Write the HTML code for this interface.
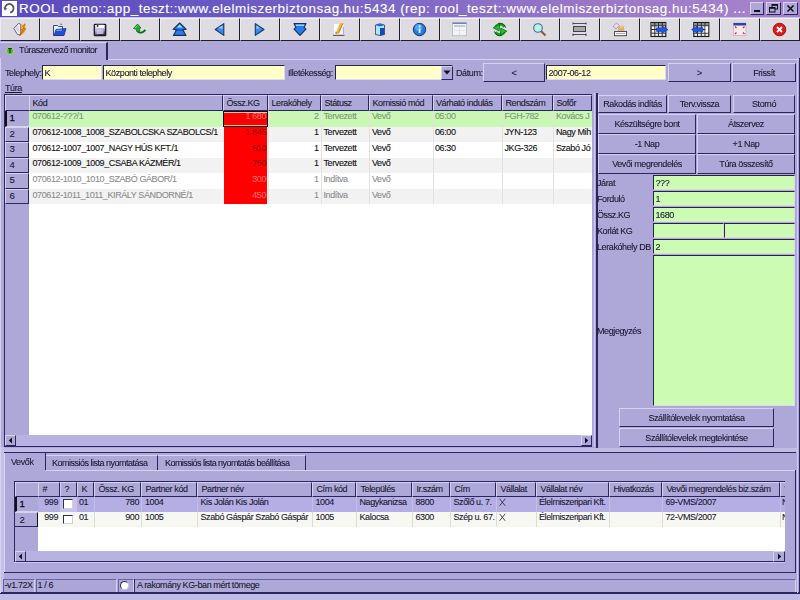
<!DOCTYPE html>
<html><head><meta charset="utf-8">
<style>
*{box-sizing:border-box}
html,body{margin:0;padding:0;width:800px;height:600px;overflow:hidden;background:#aea8d9;font-family:"Liberation Sans",sans-serif;color:#1a1830}
.a{position:absolute}
.t{position:absolute;white-space:nowrap;font-size:9px;line-height:10px;letter-spacing:-0.4px;color:#1a1830;-webkit-text-stroke:0.1px currentColor}
.tb{position:absolute;top:18px;width:40px;height:23.3px;background:#dedce0;border-top:1px solid #f2f0f4;border-left:1px solid #eceaf2;border-right:1.2px solid #1e1e28;border-bottom:1.5px solid #1e1e28}
.tb svg{position:absolute}
</style></head><body><div style="position:absolute;left:0;top:0;width:800px;height:600px;overflow:hidden;filter:blur(0.3px)">
<div class="a" style="left:0px;top:0px;width:800px;height:17px;background:linear-gradient(90deg,#5a4abe 0%,#6a5ac4 30%,#9a78c8 75%,#a684cc 100%)"></div>
<div class="a" style="left:2px;top:1px;width:15px;height:15px;background:#fff"></div>
<svg class="a" style="left:3px;top:2px" width="13" height="13" viewBox="0 0 13 13"><path d="M2.1 7.2 A4.3 4.3 0 1 1 7.1 10.5" fill="none" stroke="#4c5660" stroke-width="1.8"/><path d="M0.9 5.6 L2.2 8.2 L3.9 6.2" fill="none" stroke="#4c5660" stroke-width="1"/></svg>
<div class="t" style="left:19px;top:0px;font-size:13.4px;line-height:17px;color:#fff;letter-spacing:0.52px;-webkit-text-stroke:0.12px #fff">ROOL demo::app_teszt::www.elelmiszerbiztonsag.hu:5434 (rep: rool_teszt::www.elelmiszerbiztonsag.hu:5434) ...</div>
<div class="a" style="left:750px;top:2px;width:14px;height:13px;background:#aea8d9;border-top:1px solid #d6d3ee;border-left:1px solid #d6d3ee;border-right:1px solid #2c2660;border-bottom:1px solid #2c2660;"></div>
<div class="a" style="left:766px;top:2px;width:15px;height:13px;background:#aea8d9;border-top:1px solid #d6d3ee;border-left:1px solid #d6d3ee;border-right:1px solid #2c2660;border-bottom:1px solid #2c2660;"></div>
<div class="a" style="left:783px;top:2px;width:15px;height:13px;background:#aea8d9;border-top:1px solid #d6d3ee;border-left:1px solid #d6d3ee;border-right:1px solid #2c2660;border-bottom:1px solid #2c2660;"></div>
<div class="a" style="left:754px;top:10px;width:6px;height:2px;background:#101018"></div>
<svg class="a" style="left:766px;top:2px" width="15" height="13" viewBox="0 0 15 13"><rect x="6" y="2.5" width="5.5" height="4.5" fill="none" stroke="#101018" stroke-width="1"/><rect x="6" y="2.5" width="5.5" height="1.3" fill="#101018"/><rect x="3.5" y="5.5" width="5.5" height="4.5" fill="#aea8d9" stroke="#101018" stroke-width="1"/><rect x="3.5" y="5.5" width="5.5" height="1.3" fill="#101018"/></svg>
<svg class="a" style="left:783px;top:2px" width="15" height="13" viewBox="0 0 15 13"><path d="M4.5 3.5 L10.5 9.5 M10.5 3.5 L4.5 9.5" stroke="#101018" stroke-width="1.6"/></svg>
<div class="a" style="left:0px;top:17px;width:800px;height:1px;background:#c8c4e4"></div>
<div id="toolbar"><div class="tb" style="left:0px"><svg width="20" height="20" viewBox="0 0 20 20" style="left:9px;top:0px"><path d="M8.5 4.5 L3.8 9.5 L7.5 15.5 L10.5 16 L10.5 5 Z" fill="#f4f2ff" stroke="#505070" stroke-width="0.9" stroke-linejoin="round"/><path d="M5 9.5 L8.5 6 L9.5 14.5 Z" fill="#d8d0f4"/><path d="M10.5 5 Q15.5 6 15.8 10 Q15.5 14 10.5 16 Z" fill="#f0a830"/><path d="M14.6 4.8 L10.4 10.8 L12.8 10.8 L9.8 16.6 L15.6 9.6 L13.2 9.6 L15.2 5.2 Z" fill="#e89018" stroke="#a85808" stroke-width="0.6"/><path d="M12.8 7.5 L11.5 10" stroke="#ffe080" stroke-width="0.8"/></svg></div><div class="tb" style="left:40px"><svg width="20" height="20" viewBox="0 0 20 20" style="left:9px;top:0px"><path d="M3.5 6.5 L7.5 6.5 L8.5 7.5 L12.5 7.5 L12.5 16.5 L3.5 16.5 Z" fill="#dff4ff" stroke="#404870" stroke-width="1"/><path d="M10 5 L12 5.5" stroke="#6070a0" stroke-width="1"/><path d="M6 10.5 L16 9.5 L14 16.5 L4 16.5 Z" fill="#2050d8" stroke="#203080" stroke-width="0.8"/><path d="M6.5 11.5 L12 11" stroke="#8ab0ff" stroke-width="1"/></svg></div><div class="tb" style="left:80px"><svg width="20" height="20" viewBox="0 0 20 20" style="left:9px;top:0px"><defs><linearGradient id="fl" x1="0" y1="0" x2="0.3" y2="1"><stop offset="0" stop-color="#e8e6f8"/><stop offset="0.55" stop-color="#b8b4d8"/><stop offset="1" stop-color="#303048"/></linearGradient></defs><rect x="4.3" y="5.3" width="11.4" height="11.4" rx="0.8" fill="url(#fl)" stroke="#1a1a28" stroke-width="1.3"/><rect x="6.2" y="5.8" width="7.8" height="3.2" fill="#ffffff"/><rect x="6.8" y="5.8" width="1.6" height="2.4" fill="#404050"/><rect x="6.5" y="10.5" width="7" height="4.5" fill="#d4d0ee" opacity="0.8"/></svg></div><div class="tb" style="left:120px"><svg width="20" height="20" viewBox="0 0 20 20" style="left:9px;top:0px"><path d="M3.5 9.5 L7.5 5 L11 9 L9 9.5 L10 12 L7 13 L6 10 Z" fill="#20b030" stroke="#106018" stroke-width="0.7"/><path d="M8 12.5 Q10.5 15.5 15.5 11" fill="none" stroke="#0a6a14" stroke-width="1.8"/><path d="M5 9 L7.5 6.5" stroke="#80f080" stroke-width="0.8"/></svg></div><div class="tb" style="left:160px"><svg width="20" height="20" viewBox="0 0 20 20" style="left:9px;top:0px"><path d="M9.7 4 L16.3 10.3 L12.9 10.9 L16 16.4 L3.4 16.4 L6.5 10.9 L3.1 10.3 Z" fill="#2a7ce8" stroke="#16305e" stroke-width="1.1" stroke-linejoin="round"/><path d="M9.7 5.6 L12.4 8.4 L7 8.4 Z" fill="#a0e8ff"/><path d="M5.5 11 L13.9 11" stroke="#0e3a8a" stroke-width="0.9"/></svg></div><div class="tb" style="left:200px"><svg width="20" height="20" viewBox="0 0 20 20" style="left:9px;top:0px"><path d="M5.2 10.5 L13.8 4.6 L13.8 16.4 Z" fill="#3a8ae8" stroke="#18386a" stroke-width="1.1" stroke-linejoin="round"/><path d="M8 9 L12.5 6.5 L12.5 10 Z" fill="#a0e0ff" opacity="0.8"/></svg></div><div class="tb" style="left:240px"><svg width="20" height="20" viewBox="0 0 20 20" style="left:9px;top:0px"><path d="M14 10.5 L5.3 4.6 L5.3 16.4 Z" fill="#3a8ae8" stroke="#18386a" stroke-width="1.1" stroke-linejoin="round"/><path d="M6.5 6.5 L10 9 L6.5 10 Z" fill="#a0e0ff" opacity="0.8"/></svg></div><div class="tb" style="left:280px"><svg width="20" height="20" viewBox="0 0 20 20" style="left:9px;top:0px"><path d="M4 4.6 L16 4.6 L14 8.4 L16 10.2 L10 16.4 L4 10.2 L6 8.4 Z" fill="#2a7ce8" stroke="#16305e" stroke-width="1.1" stroke-linejoin="round"/><path d="M5.6 5.5 L14.4 5.5 L14 7 L6 7 Z" fill="#90d8ff"/></svg></div><div class="tb" style="left:320px"><svg width="20" height="20" viewBox="0 0 20 20" style="left:9px;top:0px"><rect x="4" y="5" width="9.5" height="10.5" fill="#fbf8ff"/><path d="M13.5 4.2 L9 14.5 L5.5 14.5 L10 4.2 Z" fill="#f0b838"/><path d="M12.8 4.5 L8.4 14.3" stroke="#c88020" stroke-width="1"/><path d="M5.6 12.5 L5.5 14.5 L7.5 14.5" fill="#606060"/><path d="M3 16.4 L14.5 16.4" stroke="#606060" stroke-width="1.2"/><path d="M13.4 8 L13.4 15" stroke="#b0a8f0" stroke-width="1.2"/></svg></div><div class="tb" style="left:360px"><svg width="20" height="20" viewBox="0 0 20 20" style="left:9px;top:0px"><path d="M5.5 6 Q10 3.5 14.5 6 L14.5 15.5 Q10 17.5 5.5 15.5 Z" fill="#a8e8ff" stroke="#303858" stroke-width="0.8"/><path d="M10 9 L14.3 9 L14.3 15.5 Q12 16.5 10 16.5 Z" fill="#1848c0"/><path d="M5.8 6 Q10 8.5 14.2 6 Q10 4 5.8 6 Z" fill="#2a60d8"/></svg></div><div class="tb" style="left:400px"><svg width="20" height="20" viewBox="0 0 20 20" style="left:9px;top:0px"><circle cx="9.5" cy="10.5" r="6.2" fill="#2a78e0" stroke="#183870" stroke-width="1"/><circle cx="8.5" cy="8.5" r="3.5" fill="#70c0ff" opacity="0.6"/><rect x="8.7" y="9.5" width="1.8" height="4.5" fill="#e0f4ff"/><rect x="8.7" y="6.5" width="1.8" height="1.8" fill="#e0f4ff"/></svg></div><div class="tb" style="left:440px"><svg width="20" height="20" viewBox="0 0 20 20" style="left:9px;top:0px"><rect x="2.5" y="3.8" width="14" height="13" fill="#f2f4f4" stroke="#b0b4c8" stroke-width="0.8"/><rect x="2.5" y="3.5" width="14" height="1.5" fill="#7080c0"/><rect x="4" y="6.3" width="11" height="1.4" fill="#8890a0" opacity="0.6"/><path d="M9.5 8.5 L9.5 16" stroke="#d8dce0" stroke-width="0.8"/><path d="M4 11.5 L15 11.5" stroke="#e4e0d8" stroke-width="0.8"/></svg></div><div class="tb" style="left:480px"><svg width="20" height="20" viewBox="0 0 20 20" style="left:9px;top:0px"><path d="M5.2 9.5 A5 5 0 0 1 14.5 8" fill="none" stroke="#16a024" stroke-width="2.6"/><path d="M14.8 11.5 A5 5 0 0 1 5.5 13" fill="none" stroke="#16a024" stroke-width="2.6"/><path d="M8 4.6 A5.8 5.8 0 0 1 15.6 8.6" fill="none" stroke="#0a4a10" stroke-width="0.9"/><path d="M12 16.4 A5.8 5.8 0 0 1 4.4 12.4" fill="none" stroke="#0a4a10" stroke-width="0.9"/><path d="M3.2 8.8 L9.6 5.2 L9.2 12 Z" fill="#22c030" stroke="#0a5c10" stroke-width="0.7" stroke-linejoin="round"/><path d="M16.8 12.2 L10.4 15.8 L10.8 9 Z" fill="#22c030" stroke="#0a5c10" stroke-width="0.7" stroke-linejoin="round"/></svg></div><div class="tb" style="left:520px"><svg width="20" height="20" viewBox="0 0 20 20" style="left:9px;top:0px"><path d="M11 12 L15.5 16.5" stroke="#8a6040" stroke-width="2.2"/><circle cx="8" cy="9" r="4.3" fill="#b8f0f8" stroke="#407080" stroke-width="1.1"/></svg></div><div class="tb" style="left:560px"><svg width="20" height="20" viewBox="0 0 20 20" style="left:9px;top:0px"><path d="M3 4.5 L16 4.5 M3 15.5 L16 15.5" stroke="#505058" stroke-width="1"/><rect x="3.5" y="7.5" width="12" height="5" fill="#a8a8a8" stroke="#404048" stroke-width="1"/><path d="M3 3.5 L3 5.5 M16 3.5 L16 5.5 M3 14.5 L3 17 M16 14.5 L16 17" stroke="#404048" stroke-width="1"/></svg></div><div class="tb" style="left:600px"><svg width="20" height="20" viewBox="0 0 20 20" style="left:9px;top:0px"><path d="M3 7.5 L6.5 4 L9.5 6.5 L6 10 Z" fill="#e0ddf4" stroke="#8888a8" stroke-width="0.7"/><path d="M8 7.5 L13.5 6.5 L14.5 12.5 L8 12.5 Z" fill="#e0b070"/><path d="M10 8 L12.5 8" stroke="#f8e0b0" stroke-width="1"/><rect x="4.5" y="12.5" width="12" height="4.2" fill="#f4f4f4" stroke="#505050" stroke-width="1"/><path d="M6 14.5 L15 14.5" stroke="#a0a0a0" stroke-width="0.8"/></svg></div><div class="tb" style="left:640px"><svg width="20" height="20" viewBox="0 0 20 20" style="left:9px;top:0px"><rect x="1" y="3.5" width="14.8" height="14" fill="#f0f0f0" stroke="#202020" stroke-width="1.2"/><rect x="1.5" y="4" width="14" height="2.6" fill="#8c8c80"/><path d="M1 6.8 L15.8 6.8 M1 10.5 L15.8 10.5 M1 14.2 L15.8 14.2 M4.8 3.5 L4.8 17.5 M8.5 3.5 L8.5 17.5 M12.2 3.5 L12.2 17.5" stroke="#303030" stroke-width="1"/><path d="M6.5 8.8 L12.5 8.8 L12.5 7.2 L18 10.6 L12.5 14 L12.5 12.4 L6.5 12.4 Z" fill="#1a5ae8" stroke="#0a34b0" stroke-width="0.6"/></svg></div><div class="tb" style="left:680px"><svg width="20" height="20" viewBox="0 0 20 20" style="left:9px;top:0px"><rect x="3.8" y="3.5" width="15" height="14" fill="#f0f0f0" stroke="#202020" stroke-width="1.2"/><rect x="4.3" y="4" width="14" height="2.6" fill="#8c8c80"/><path d="M3.8 6.8 L18.8 6.8 M3.8 10.5 L18.8 10.5 M3.8 14.2 L18.8 14.2 M7.5 3.5 L7.5 17.5 M11.3 3.5 L11.3 17.5 M15 3.5 L15 17.5" stroke="#303030" stroke-width="1"/><rect x="15.5" y="7.5" width="2.6" height="6" fill="#ffffff"/><path d="M13 8.8 L7 8.8 L7 7.2 L1.5 10.6 L7 14 L7 12.4 L13 12.4 Z" fill="#1a5ae8" stroke="#0a34b0" stroke-width="0.6"/></svg></div><div class="tb" style="left:720px"><svg width="20" height="20" viewBox="0 0 20 20" style="left:9px;top:0px"><rect x="3.5" y="4" width="12.5" height="12.5" fill="#fce8e8" stroke="#c8b0c0" stroke-width="0.8"/><rect x="3.5" y="4" width="12.5" height="2.5" fill="#2848a8"/><path d="M5 7.5 L6.5 9 M14.5 7.5 L13 9 M5 15 L6.5 13.5 M14.5 15 L13 13.5" stroke="#a04060" stroke-width="1.3"/></svg></div><div class="tb" style="left:760px"><svg width="20" height="20" viewBox="0 0 20 20" style="left:9px;top:0px"><circle cx="9.5" cy="10.5" r="6.3" fill="#e01818" stroke="#901010" stroke-width="0.9"/><path d="M7 8 L12 13 M12 8 L7 13" stroke="#fff" stroke-width="1.8"/></svg></div></div>
<div class="a" style="left:0px;top:42px;width:108px;height:18px;border-top:1px solid #d6d3ee;border-right:2px solid #2c2660"></div>
<div class="a" style="left:108px;top:59px;width:692px;height:1px;background:#d6d3ee"></div>
<div class="a" style="left:6px;top:46.5px;width:8px;height:8px;border-radius:50%;background:#58b038;border:1px solid #98d878"></div>
<div class="t" style="left:6px;top:46.5px;width:8px;text-align:center;font-size:6.5px;font-weight:bold;color:#102810;line-height:8.5px;letter-spacing:0">T</div>
<div class="t" style="left:19px;top:44.7px;font-size:9px;letter-spacing:-0.45px">Túraszervező monitor</div>
<div class="t" style="left:5px;top:67.9px;">Telephely:</div>
<div class="a" style="left:42px;top:65px;width:60px;height:15px;background:#ffffc8;border-top:1.3px solid #262640;border-left:1.5px solid #262640;border-bottom:1px solid #dcd8f0;border-right:1px solid #dcd8f0"></div>
<div class="t" style="left:44.5px;top:67.9px;">K</div>
<div class="a" style="left:103px;top:65px;width:182px;height:15px;background:#ffffc8;border-top:1.3px solid #262640;border-left:1.5px solid #262640;border-bottom:1px solid #dcd8f0;border-right:1px solid #dcd8f0"></div>
<div class="t" style="left:105.5px;top:67.9px;">Központi telephely</div>
<div class="t" style="left:288px;top:67.9px;">Illetékesség:</div>
<div class="a" style="left:335px;top:65px;width:118px;height:15px;background:#ffffc8;border-top:1.3px solid #262640;border-left:1.5px solid #262640;border-bottom:1px solid #dcd8f0;border-right:1px solid #dcd8f0"></div>
<div class="a" style="left:441px;top:66px;width:12px;height:14px;background:#aea8d9;border-top:1px solid #d6d3ee;border-left:1px solid #d6d3ee;border-right:1px solid #2c2660;border-bottom:1px solid #2c2660;"></div>
<svg class="a" style="left:443px;top:70px" width="8" height="5" viewBox="0 0 8 5"><path d="M0.5 0.5 L7.5 0.5 L4 4.5 Z" fill="#101018"/></svg>
<div class="t" style="left:456px;top:67.9px;">Dátum:</div>
<div class="a" style="left:483px;top:63px;width:62px;height:19px;background:#aea8d9;border-top:1px solid #d6d3ee;border-left:1px solid #d6d3ee;border-right:1px solid #2c2660;border-bottom:1px solid #2c2660;"></div>
<div class="t" style="left:483px;width:62px;text-align:center;top:67.6px;">&lt;</div>
<div class="a" style="left:546px;top:65px;width:120px;height:15px;background:#ffffc8;border-top:1.3px solid #262640;border-left:1.5px solid #262640;border-bottom:1px solid #dcd8f0;border-right:1px solid #dcd8f0"></div>
<div class="t" style="left:548.5px;top:67.9px;">2007-06-12</div>
<div class="a" style="left:668px;top:63px;width:63px;height:19px;background:#aea8d9;border-top:1px solid #d6d3ee;border-left:1px solid #d6d3ee;border-right:1px solid #2c2660;border-bottom:1px solid #2c2660;"></div>
<div class="t" style="left:668px;width:63px;text-align:center;top:67.6px;">&gt;</div>
<div class="a" style="left:732px;top:63px;width:64px;height:19px;background:#aea8d9;border-top:1px solid #d6d3ee;border-left:1px solid #d6d3ee;border-right:1px solid #2c2660;border-bottom:1px solid #2c2660;"></div>
<div class="t" style="left:732px;width:64px;text-align:center;top:67.6px;">Frissít</div>
<div class="t" style="left:5px;top:82.9px;"><u>Túra</u></div>
<div class="a" style="left:4px;top:94px;width:588px;height:353px;background:#fff;border-left:1px solid #2c2660;border-top:1px solid #2c2660"></div>
<div class="a" style="left:5px;top:95px;width:24px;height:340px;background:#aea8d9"></div>
<div class="a" style="left:5px;top:95px;width:24px;height:16px;background:#aea8d9;border-top:1px solid #d6d3ee;border-left:1px solid #d6d3ee;border-bottom:1px solid #2c2660"></div>
<div class="a" style="left:29px;top:95px;width:194px;height:16px;background:#aea8d9;border-top:1px solid #d6d3ee;border-left:1px solid #d6d3ee;border-right:1px solid #2c2660;border-bottom:1px solid #2c2660;"></div>
<div class="t" style="left:32.5px;top:97.9px;">Kód</div>
<div class="a" style="left:223px;top:95px;width:45px;height:16px;background:#aea8d9;border-top:1px solid #d6d3ee;border-left:1px solid #d6d3ee;border-right:1px solid #2c2660;border-bottom:1px solid #2c2660;"></div>
<div class="t" style="left:226.5px;top:97.9px;">Össz.KG</div>
<div class="a" style="left:268px;top:95px;width:53px;height:16px;background:#aea8d9;border-top:1px solid #d6d3ee;border-left:1px solid #d6d3ee;border-right:1px solid #2c2660;border-bottom:1px solid #2c2660;"></div>
<div class="t" style="left:271.5px;top:97.9px;">Lerakóhely</div>
<div class="a" style="left:321px;top:95px;width:48px;height:16px;background:#aea8d9;border-top:1px solid #d6d3ee;border-left:1px solid #d6d3ee;border-right:1px solid #2c2660;border-bottom:1px solid #2c2660;"></div>
<div class="t" style="left:324.5px;top:97.9px;">Státusz</div>
<div class="a" style="left:369px;top:95px;width:63.5px;height:16px;background:#aea8d9;border-top:1px solid #d6d3ee;border-left:1px solid #d6d3ee;border-right:1px solid #2c2660;border-bottom:1px solid #2c2660;"></div>
<div class="t" style="left:372.5px;top:97.9px;">Komissió mód</div>
<div class="a" style="left:432.5px;top:95px;width:69.5px;height:16px;background:#aea8d9;border-top:1px solid #d6d3ee;border-left:1px solid #d6d3ee;border-right:1px solid #2c2660;border-bottom:1px solid #2c2660;"></div>
<div class="t" style="left:436.0px;top:97.9px;">Várható indulás</div>
<div class="a" style="left:502px;top:95px;width:51px;height:16px;background:#aea8d9;border-top:1px solid #d6d3ee;border-left:1px solid #d6d3ee;border-right:1px solid #2c2660;border-bottom:1px solid #2c2660;"></div>
<div class="t" style="left:505.5px;top:97.9px;">Rendszám</div>
<div class="a" style="left:553px;top:95px;width:39px;height:16px;background:#aea8d9;border-top:1px solid #d6d3ee;border-left:1px solid #d6d3ee;border-right:1px solid #2c2660;border-bottom:1px solid #2c2660;"></div>
<div class="t" style="left:556.5px;top:97.9px;">Sofőr</div>
<div class="a" style="left:29px;top:111px;width:563px;height:93.30000000000001px;overflow:hidden">
<div class="a" style="left:0px;top:0.0px;width:563px;height:15.55px;background:#c8f8b4"></div>
<div class="a" style="left:239px;top:0.0px;width:1px;height:15.55px;background:#e2e2e2"></div>
<div class="a" style="left:292px;top:0.0px;width:1px;height:15.55px;background:#e2e2e2"></div>
<div class="a" style="left:340px;top:0.0px;width:1px;height:15.55px;background:#e2e2e2"></div>
<div class="a" style="left:403.5px;top:0.0px;width:1px;height:15.55px;background:#e2e2e2"></div>
<div class="a" style="left:473px;top:0.0px;width:1px;height:15.55px;background:#e2e2e2"></div>
<div class="a" style="left:524px;top:0.0px;width:1px;height:15.55px;background:#e2e2e2"></div>
<div class="a" style="left:0px;top:15.55px;width:563px;height:15.55px;background:#f2f2f2"></div>
<div class="a" style="left:239px;top:15.55px;width:1px;height:15.55px;background:#e2e2e2"></div>
<div class="a" style="left:292px;top:15.55px;width:1px;height:15.55px;background:#e2e2e2"></div>
<div class="a" style="left:340px;top:15.55px;width:1px;height:15.55px;background:#e2e2e2"></div>
<div class="a" style="left:403.5px;top:15.55px;width:1px;height:15.55px;background:#e2e2e2"></div>
<div class="a" style="left:473px;top:15.55px;width:1px;height:15.55px;background:#e2e2e2"></div>
<div class="a" style="left:524px;top:15.55px;width:1px;height:15.55px;background:#e2e2e2"></div>
<div class="a" style="left:0px;top:31.1px;width:563px;height:15.55px;background:#ffffff"></div>
<div class="a" style="left:239px;top:31.1px;width:1px;height:15.55px;background:#e2e2e2"></div>
<div class="a" style="left:292px;top:31.1px;width:1px;height:15.55px;background:#e2e2e2"></div>
<div class="a" style="left:340px;top:31.1px;width:1px;height:15.55px;background:#e2e2e2"></div>
<div class="a" style="left:403.5px;top:31.1px;width:1px;height:15.55px;background:#e2e2e2"></div>
<div class="a" style="left:473px;top:31.1px;width:1px;height:15.55px;background:#e2e2e2"></div>
<div class="a" style="left:524px;top:31.1px;width:1px;height:15.55px;background:#e2e2e2"></div>
<div class="a" style="left:0px;top:46.650000000000006px;width:563px;height:15.55px;background:#f2f2f2"></div>
<div class="a" style="left:239px;top:46.650000000000006px;width:1px;height:15.55px;background:#e2e2e2"></div>
<div class="a" style="left:292px;top:46.650000000000006px;width:1px;height:15.55px;background:#e2e2e2"></div>
<div class="a" style="left:340px;top:46.650000000000006px;width:1px;height:15.55px;background:#e2e2e2"></div>
<div class="a" style="left:403.5px;top:46.650000000000006px;width:1px;height:15.55px;background:#e2e2e2"></div>
<div class="a" style="left:473px;top:46.650000000000006px;width:1px;height:15.55px;background:#e2e2e2"></div>
<div class="a" style="left:524px;top:46.650000000000006px;width:1px;height:15.55px;background:#e2e2e2"></div>
<div class="a" style="left:0px;top:62.2px;width:563px;height:15.55px;background:#ffffff"></div>
<div class="a" style="left:239px;top:62.2px;width:1px;height:15.55px;background:#e2e2e2"></div>
<div class="a" style="left:292px;top:62.2px;width:1px;height:15.55px;background:#e2e2e2"></div>
<div class="a" style="left:340px;top:62.2px;width:1px;height:15.55px;background:#e2e2e2"></div>
<div class="a" style="left:403.5px;top:62.2px;width:1px;height:15.55px;background:#e2e2e2"></div>
<div class="a" style="left:473px;top:62.2px;width:1px;height:15.55px;background:#e2e2e2"></div>
<div class="a" style="left:524px;top:62.2px;width:1px;height:15.55px;background:#e2e2e2"></div>
<div class="a" style="left:0px;top:77.75px;width:563px;height:15.55px;background:#f2f2f2"></div>
<div class="a" style="left:239px;top:77.75px;width:1px;height:15.55px;background:#e2e2e2"></div>
<div class="a" style="left:292px;top:77.75px;width:1px;height:15.55px;background:#e2e2e2"></div>
<div class="a" style="left:340px;top:77.75px;width:1px;height:15.55px;background:#e2e2e2"></div>
<div class="a" style="left:403.5px;top:77.75px;width:1px;height:15.55px;background:#e2e2e2"></div>
<div class="a" style="left:473px;top:77.75px;width:1px;height:15.55px;background:#e2e2e2"></div>
<div class="a" style="left:524px;top:77.75px;width:1px;height:15.55px;background:#e2e2e2"></div>
</div>
<div class="a" style="left:5px;top:111.0px;width:24px;height:15.55px;background:#aea8d9;border-left:2px solid #101018;border-bottom:1px solid #d6d3ee"></div>
<div class="t" style="left:9.5px;top:113.2px;font-size:9.6px;-webkit-text-stroke:0.3px #101018;color:#101018;">1</div>
<div class="a" style="left:223.5px;top:111.0px;width:43.3px;height:15.55px;background:#fe0000"></div>
<div class="t" style="left:66px;width:200px;text-align:right;top:111.2px;color:#f07070">1 680</div>
<div class="t" style="left:32.5px;top:111.2px;color:#7a9a70">070612-???/1</div>
<div class="t" style="left:118.5px;width:200px;text-align:right;top:111.2px;color:#7a9a70">2</div>
<div class="t" style="left:323.5px;top:111.2px;color:#7a9a70">Tervezett</div>
<div class="t" style="left:372px;top:111.2px;color:#7a9a70">Vevő</div>
<div class="t" style="left:435px;top:111.2px;color:#7a9a70">05:00</div>
<div class="t" style="left:504.5px;top:111.2px;color:#7a9a70">FGH-782</div>
<div class="t" style="left:556px;top:111.2px;color:#7a9a70">Kovács J</div>
<div class="a" style="left:5px;top:126.55px;width:24px;height:15.55px;background:#aea8d9;border-bottom:1px solid #2c2660;border-top:1px solid #d6d3ee;border-left:1px solid #d6d3ee;border-right:1px solid #2c2660"></div>
<div class="t" style="left:9.5px;top:128.75px;font-size:9.6px;">2</div>
<div class="a" style="left:223.5px;top:126.55px;width:43.3px;height:15.55px;background:#fe0000"></div>
<div class="t" style="left:66px;width:200px;text-align:right;top:127.35px;color:#a00000">1 845</div>
<div class="t" style="left:32.5px;top:127.35px;color:#101010">070612-1008_1008_SZABOLCSKA SZABOLCS/1</div>
<div class="t" style="left:118.5px;width:200px;text-align:right;top:127.35px;color:#101010">1</div>
<div class="t" style="left:323.5px;top:127.35px;color:#101010">Tervezett</div>
<div class="t" style="left:372px;top:127.35px;color:#101010">Vevő</div>
<div class="t" style="left:435px;top:127.35px;color:#101010">06:00</div>
<div class="t" style="left:504.5px;top:127.35px;color:#101010">JYN-123</div>
<div class="t" style="left:556px;top:127.35px;color:#101010">Nagy Mih</div>
<div class="a" style="left:5px;top:142.1px;width:24px;height:15.55px;background:#aea8d9;border-bottom:1px solid #2c2660;border-top:1px solid #d6d3ee;border-left:1px solid #d6d3ee;border-right:1px solid #2c2660"></div>
<div class="t" style="left:9.5px;top:144.3px;font-size:9.6px;">3</div>
<div class="a" style="left:223.5px;top:142.1px;width:43.3px;height:15.55px;background:#fe0000"></div>
<div class="t" style="left:66px;width:200px;text-align:right;top:142.9px;color:#a00000">510</div>
<div class="t" style="left:32.5px;top:142.9px;color:#101010">070612-1007_1007_NAGY HÚS KFT./1</div>
<div class="t" style="left:118.5px;width:200px;text-align:right;top:142.9px;color:#101010">1</div>
<div class="t" style="left:323.5px;top:142.9px;color:#101010">Tervezett</div>
<div class="t" style="left:372px;top:142.9px;color:#101010">Vevő</div>
<div class="t" style="left:435px;top:142.9px;color:#101010">06:30</div>
<div class="t" style="left:504.5px;top:142.9px;color:#101010">JKG-326</div>
<div class="t" style="left:556px;top:142.9px;color:#101010">Szabó Jó</div>
<div class="a" style="left:5px;top:157.65px;width:24px;height:15.55px;background:#aea8d9;border-bottom:1px solid #2c2660;border-top:1px solid #d6d3ee;border-left:1px solid #d6d3ee;border-right:1px solid #2c2660"></div>
<div class="t" style="left:9.5px;top:159.85px;font-size:9.6px;">4</div>
<div class="a" style="left:223.5px;top:157.65px;width:43.3px;height:15.55px;background:#fe0000"></div>
<div class="t" style="left:66px;width:200px;text-align:right;top:158.45px;color:#a00000">750</div>
<div class="t" style="left:32.5px;top:158.45px;color:#101010">070612-1009_1009_CSABA KÁZMÉR/1</div>
<div class="t" style="left:118.5px;width:200px;text-align:right;top:158.45px;color:#101010">1</div>
<div class="t" style="left:323.5px;top:158.45px;color:#101010">Tervezett</div>
<div class="t" style="left:372px;top:158.45px;color:#101010">Vevő</div>
<div class="a" style="left:5px;top:173.2px;width:24px;height:15.55px;background:#aea8d9;border-bottom:1px solid #2c2660;border-top:1px solid #d6d3ee;border-left:1px solid #d6d3ee;border-right:1px solid #2c2660"></div>
<div class="t" style="left:9.5px;top:175.4px;font-size:9.6px;">5</div>
<div class="a" style="left:223.5px;top:173.2px;width:43.3px;height:15.55px;background:#fe0000"></div>
<div class="t" style="left:66px;width:200px;text-align:right;top:174.0px;color:#ff6a6a">300</div>
<div class="t" style="left:32.5px;top:174.0px;color:#8c8c8c">070612-1010_1010_SZABÓ GÁBOR/1</div>
<div class="t" style="left:118.5px;width:200px;text-align:right;top:174.0px;color:#8c8c8c">1</div>
<div class="t" style="left:323.5px;top:174.0px;color:#8c8c8c">Indítva</div>
<div class="t" style="left:372px;top:174.0px;color:#8c8c8c">Vevő</div>
<div class="a" style="left:5px;top:188.75px;width:24px;height:15.55px;background:#aea8d9;border-bottom:1px solid #2c2660;border-top:1px solid #d6d3ee;border-left:1px solid #d6d3ee;border-right:1px solid #2c2660"></div>
<div class="t" style="left:9.5px;top:190.95px;font-size:9.6px;">6</div>
<div class="a" style="left:223.5px;top:188.75px;width:43.3px;height:15.55px;background:#fe0000"></div>
<div class="t" style="left:66px;width:200px;text-align:right;top:189.55px;color:#ff6a6a">450</div>
<div class="t" style="left:32.5px;top:189.55px;color:#8c8c8c">070612-1011_1011_KIRÁLY SÁNDORNÉ/1</div>
<div class="t" style="left:118.5px;width:200px;text-align:right;top:189.55px;color:#8c8c8c">1</div>
<div class="t" style="left:323.5px;top:189.55px;color:#8c8c8c">Indítva</div>
<div class="t" style="left:372px;top:189.55px;color:#8c8c8c">Vevő</div>
<div class="a" style="left:223px;top:111px;width:45px;height:15.55px;border:1px solid #101018;box-shadow:inset 0 1px 0 #ffc8a0, inset 0 -1px 0 #ffc8a0"></div>
<div class="a" style="left:5px;top:435px;width:587px;height:11px;background:#b8b2e2"></div>
<div class="a" style="left:5px;top:435px;width:11px;height:11px;background:#aea8d9;border-top:1px solid #d6d3ee;border-left:1px solid #d6d3ee;border-right:1px solid #2c2660;border-bottom:1px solid #2c2660;"></div>
<svg class="a" style="left:8px;top:437px" width="5" height="7" viewBox="0 0 5 7"><path d="M4 0.5 L4 6.5 L0.8 3.5 Z" fill="#101018"/></svg>
<div class="a" style="left:581px;top:435px;width:11px;height:11px;background:#aea8d9;border-top:1px solid #d6d3ee;border-left:1px solid #d6d3ee;border-right:1px solid #2c2660;border-bottom:1px solid #2c2660;"></div>
<svg class="a" style="left:584px;top:437px" width="5" height="7" viewBox="0 0 5 7"><path d="M1 0.5 L1 6.5 L4.2 3.5 Z" fill="#101018"/></svg>
<div class="a" style="left:4px;top:446px;width:588px;height:1px;background:#2c2660"></div>
<div class="a" style="left:594px;top:93px;width:1px;height:354px;background:#ccc8ee"></div>
<div class="a" style="left:596px;top:93px;width:1.5px;height:359px;background:#2c2660"></div>
<div class="a" style="left:598px;top:95px;width:69px;height:18px;background:#aea8d9;border-top:1px solid #d6d3ee;border-left:1px solid #d6d3ee;border-right:1px solid #2c2660;border-bottom:1px solid #2c2660;"></div>
<div class="t" style="left:598px;width:69px;text-align:center;top:99.1px;">Rakodás indítás</div>
<div class="a" style="left:668px;top:95px;width:63px;height:18px;background:#aea8d9;border-top:1px solid #d6d3ee;border-left:1px solid #d6d3ee;border-right:1px solid #2c2660;border-bottom:1px solid #2c2660;"></div>
<div class="t" style="left:668px;width:63px;text-align:center;top:99.1px;">Terv.vissza</div>
<div class="a" style="left:733px;top:95px;width:62px;height:18px;background:#aea8d9;border-top:1px solid #d6d3ee;border-left:1px solid #d6d3ee;border-right:1px solid #2c2660;border-bottom:1px solid #2c2660;"></div>
<div class="t" style="left:733px;width:62px;text-align:center;top:99.1px;">Stornó</div>
<div class="a" style="left:598px;top:114px;width:98px;height:19.5px;background:#aea8d9;border-top:1px solid #d6d3ee;border-left:1px solid #d6d3ee;border-right:1px solid #2c2660;border-bottom:1px solid #2c2660;"></div>
<div class="t" style="left:598px;width:98px;text-align:center;top:118.85px;">Készültségre bont</div>
<div class="a" style="left:697px;top:114px;width:98px;height:19.5px;background:#aea8d9;border-top:1px solid #d6d3ee;border-left:1px solid #d6d3ee;border-right:1px solid #2c2660;border-bottom:1px solid #2c2660;"></div>
<div class="t" style="left:697px;width:98px;text-align:center;top:118.85px;">Átszervez</div>
<div class="a" style="left:598px;top:134px;width:98px;height:19.5px;background:#aea8d9;border-top:1px solid #d6d3ee;border-left:1px solid #d6d3ee;border-right:1px solid #2c2660;border-bottom:1px solid #2c2660;"></div>
<div class="t" style="left:598px;width:98px;text-align:center;top:138.85px;">-1 Nap</div>
<div class="a" style="left:697px;top:134px;width:98px;height:19.5px;background:#aea8d9;border-top:1px solid #d6d3ee;border-left:1px solid #d6d3ee;border-right:1px solid #2c2660;border-bottom:1px solid #2c2660;"></div>
<div class="t" style="left:697px;width:98px;text-align:center;top:138.85px;">+1 Nap</div>
<div class="a" style="left:598px;top:154px;width:98px;height:19.5px;background:#aea8d9;border-top:1px solid #d6d3ee;border-left:1px solid #d6d3ee;border-right:1px solid #2c2660;border-bottom:1px solid #2c2660;"></div>
<div class="t" style="left:598px;width:98px;text-align:center;top:158.85px;">Vevői megrendelés</div>
<div class="a" style="left:697px;top:154px;width:98px;height:19.5px;background:#aea8d9;border-top:1px solid #d6d3ee;border-left:1px solid #d6d3ee;border-right:1px solid #2c2660;border-bottom:1px solid #2c2660;"></div>
<div class="t" style="left:697px;width:98px;text-align:center;top:158.85px;">Túra összesítő</div>
<div class="t" style="left:597px;top:177.7px;">Járat</div>
<div class="a" style="left:653px;top:175px;width:142px;height:15px;background:#ccfcb4;border-top:1.3px solid #262640;border-left:1.5px solid #262640;border-bottom:1px solid #dcd8f0;border-right:1px solid #dcd8f0"></div>
<div class="t" style="left:655.5px;top:177.7px;">???</div>
<div class="t" style="left:597px;top:193.7px;">Forduló</div>
<div class="a" style="left:653px;top:191px;width:142px;height:15px;background:#ccfcb4;border-top:1.3px solid #262640;border-left:1.5px solid #262640;border-bottom:1px solid #dcd8f0;border-right:1px solid #dcd8f0"></div>
<div class="t" style="left:655.5px;top:193.7px;">1</div>
<div class="t" style="left:597px;top:209.7px;">Össz.KG</div>
<div class="a" style="left:653px;top:207px;width:142px;height:15px;background:#ccfcb4;border-top:1.3px solid #262640;border-left:1.5px solid #262640;border-bottom:1px solid #dcd8f0;border-right:1px solid #dcd8f0"></div>
<div class="t" style="left:655.5px;top:209.7px;">1680</div>
<div class="t" style="left:597px;top:225.7px;">Korlát KG</div>
<div class="a" style="left:653px;top:223px;width:71px;height:15px;background:#ccfcb4;border-top:1.3px solid #262640;border-left:1.5px solid #262640;border-bottom:1px solid #dcd8f0;border-right:1px solid #dcd8f0"></div>
<div class="a" style="left:724px;top:223px;width:71px;height:15px;background:#ccfcb4;border-top:1.3px solid #262640;border-left:1.5px solid #262640;border-bottom:1px solid #dcd8f0;border-right:1px solid #dcd8f0"></div>
<div class="t" style="left:597px;top:241.7px;">Lerakóhely DB</div>
<div class="a" style="left:653px;top:239px;width:142px;height:15px;background:#ccfcb4;border-top:1.3px solid #262640;border-left:1.5px solid #262640;border-bottom:1px solid #dcd8f0;border-right:1px solid #dcd8f0"></div>
<div class="t" style="left:655.5px;top:241.7px;">2</div>
<div class="a" style="left:653px;top:255px;width:142px;height:151px;background:#ccfcb4;border-top:1.3px solid #262640;border-left:1.5px solid #262640;border-bottom:1px solid #dcd8f0;border-right:1px solid #dcd8f0"></div>
<div class="t" style="left:597px;top:325.9px;">Megjegyzés</div>
<div class="a" style="left:619px;top:408px;width:155px;height:19px;background:#aea8d9;border-top:1px solid #d6d3ee;border-left:1px solid #d6d3ee;border-right:1px solid #2c2660;border-bottom:1px solid #2c2660;"></div>
<div class="t" style="left:619px;width:155px;text-align:center;top:412.6px;">Szállítólevelek nyomtatása</div>
<div class="a" style="left:619px;top:428px;width:155px;height:19px;background:#aea8d9;border-top:1px solid #d6d3ee;border-left:1px solid #d6d3ee;border-right:1px solid #2c2660;border-bottom:1px solid #2c2660;"></div>
<div class="t" style="left:619px;width:155px;text-align:center;top:432.6px;">Szállítólevelek megtekintése</div>
<div class="a" style="left:0px;top:448px;width:797px;height:3.5px;background:#c0bce6"></div>
<div class="a" style="left:4px;top:451.5px;width:792px;height:1.2px;background:#2c2660"></div>
<div class="a" style="left:4px;top:453px;width:42px;height:17px;border-right:1.2px solid #2c2660"></div>
<div class="t" style="left:11px;top:457.2px;">Vevők</div>
<div class="a" style="left:46px;top:454.5px;width:112px;height:15.5px;border-top:1px solid #d6d3ee;border-right:1.2px solid #2c2660"></div>
<div class="t" style="left:52px;top:458.2px;letter-spacing:-0.5px">Komissiós lista nyomtatása</div>
<div class="a" style="left:158px;top:454.5px;width:148px;height:15.5px;border-top:1px solid #d6d3ee;border-right:1.2px solid #2c2660"></div>
<div class="t" style="left:165px;top:458.2px;letter-spacing:-0.56px">Komissiós lista nyomtatás beállítása</div>
<div class="a" style="left:46px;top:470px;width:750px;height:1px;background:#d6d3ee"></div>
<div class="a" style="left:4px;top:453px;width:1px;height:120px;background:#d6d3ee"></div>
<div class="a" style="left:795px;top:470px;width:1.2px;height:103px;background:#2c2660"></div>
<div class="a" style="left:4px;top:572px;width:792px;height:1.2px;background:#2c2660"></div>
<div class="a" style="left:14px;top:480.5px;width:771px;height:81.89999999999998px;background:#fff;border-left:1px solid #2c2660;border-top:1px solid #2c2660"></div>
<div class="a" style="left:15px;top:481.5px;width:23px;height:69.5px;background:#aea8d9"></div>
<div class="a" style="left:15px;top:481.5px;width:23px;height:15.0px;background:#aea8d9;border-top:1px solid #d6d3ee;border-left:1px solid #d6d3ee;border-bottom:1px solid #2c2660"></div>
<div class="a" style="left:38px;top:481.5px;width:747px;height:200px;overflow:hidden">
<div class="a" style="left:0px;top:0px;width:22px;height:15.0px;background:#aea8d9;border-top:1px solid #d6d3ee;border-left:1px solid #d6d3ee;border-right:1px solid #2c2660;border-bottom:1px solid #2c2660;"></div>
<div class="t" style="left:4.5px;top:2.8px;">#</div>
<div class="a" style="left:22px;top:0px;width:17px;height:15.0px;background:#aea8d9;border-top:1px solid #d6d3ee;border-left:1px solid #d6d3ee;border-right:1px solid #2c2660;border-bottom:1px solid #2c2660;"></div>
<div class="t" style="left:26.5px;top:2.8px;">?</div>
<div class="a" style="left:39px;top:0px;width:17px;height:15.0px;background:#aea8d9;border-top:1px solid #d6d3ee;border-left:1px solid #d6d3ee;border-right:1px solid #2c2660;border-bottom:1px solid #2c2660;"></div>
<div class="t" style="left:43.5px;top:2.8px;">K</div>
<div class="a" style="left:56px;top:0px;width:47px;height:15.0px;background:#aea8d9;border-top:1px solid #d6d3ee;border-left:1px solid #d6d3ee;border-right:1px solid #2c2660;border-bottom:1px solid #2c2660;"></div>
<div class="t" style="left:60.5px;top:2.8px;">Össz. KG</div>
<div class="a" style="left:103px;top:0px;width:56px;height:15.0px;background:#aea8d9;border-top:1px solid #d6d3ee;border-left:1px solid #d6d3ee;border-right:1px solid #2c2660;border-bottom:1px solid #2c2660;"></div>
<div class="t" style="left:107.5px;top:2.8px;">Partner kód</div>
<div class="a" style="left:159px;top:0px;width:115px;height:15.0px;background:#aea8d9;border-top:1px solid #d6d3ee;border-left:1px solid #d6d3ee;border-right:1px solid #2c2660;border-bottom:1px solid #2c2660;"></div>
<div class="t" style="left:163.5px;top:2.8px;">Partner név</div>
<div class="a" style="left:274px;top:0px;width:44px;height:15.0px;background:#aea8d9;border-top:1px solid #d6d3ee;border-left:1px solid #d6d3ee;border-right:1px solid #2c2660;border-bottom:1px solid #2c2660;"></div>
<div class="t" style="left:278.5px;top:2.8px;">Cím kód</div>
<div class="a" style="left:318px;top:0px;width:56px;height:15.0px;background:#aea8d9;border-top:1px solid #d6d3ee;border-left:1px solid #d6d3ee;border-right:1px solid #2c2660;border-bottom:1px solid #2c2660;"></div>
<div class="t" style="left:322.5px;top:2.8px;">Település</div>
<div class="a" style="left:374px;top:0px;width:38px;height:15.0px;background:#aea8d9;border-top:1px solid #d6d3ee;border-left:1px solid #d6d3ee;border-right:1px solid #2c2660;border-bottom:1px solid #2c2660;"></div>
<div class="t" style="left:378.5px;top:2.8px;">Ir.szám</div>
<div class="a" style="left:412px;top:0px;width:46px;height:15.0px;background:#aea8d9;border-top:1px solid #d6d3ee;border-left:1px solid #d6d3ee;border-right:1px solid #2c2660;border-bottom:1px solid #2c2660;"></div>
<div class="t" style="left:416.5px;top:2.8px;">Cím</div>
<div class="a" style="left:458px;top:0px;width:40px;height:15.0px;background:#aea8d9;border-top:1px solid #d6d3ee;border-left:1px solid #d6d3ee;border-right:1px solid #2c2660;border-bottom:1px solid #2c2660;"></div>
<div class="t" style="left:462.5px;top:2.8px;">Vállalat</div>
<div class="a" style="left:498px;top:0px;width:73px;height:15.0px;background:#aea8d9;border-top:1px solid #d6d3ee;border-left:1px solid #d6d3ee;border-right:1px solid #2c2660;border-bottom:1px solid #2c2660;"></div>
<div class="t" style="left:502.5px;top:2.8px;">Vállalat név</div>
<div class="a" style="left:571px;top:0px;width:53px;height:15.0px;background:#aea8d9;border-top:1px solid #d6d3ee;border-left:1px solid #d6d3ee;border-right:1px solid #2c2660;border-bottom:1px solid #2c2660;"></div>
<div class="t" style="left:575.5px;top:2.8px;">Hivatkozás</div>
<div class="a" style="left:624px;top:0px;width:118px;height:15.0px;background:#aea8d9;border-top:1px solid #d6d3ee;border-left:1px solid #d6d3ee;border-right:1px solid #2c2660;border-bottom:1px solid #2c2660;"></div>
<div class="t" style="left:628.5px;top:2.8px;">Vevői megrendelés biz.szám</div>
<div class="a" style="left:742px;top:0px;width:20px;height:15.0px;background:#aea8d9;border-top:1px solid #d6d3ee;border-left:1px solid #d6d3ee;border-right:1px solid #2c2660;border-bottom:1px solid #2c2660;"></div>
<div class="t" style="left:746.5px;top:2.8px;">V</div>
<div class="a" style="left:0px;top:15.0px;width:747px;height:15.3px;background:#b4aee4"></div>
<div class="a" style="left:22px;top:15.0px;width:17px;height:15.3px;background:#c6c2ec"></div>
<div class="t" style="left:-180px;width:200px;text-align:right;top:15.5px;">999</div>
<div class="a" style="left:25px;top:17.8px;width:9.5px;height:9.5px;background:#fff;border-top:1.6px solid #303040;border-left:1.6px solid #303040;border-right:1px solid #d0d0d8;border-bottom:1px solid #d0d0d8"></div>
<div class="t" style="left:41px;top:15.5px;">01</div>
<div class="t" style="left:-99px;width:200px;text-align:right;top:15.5px;">780</div>
<div class="t" style="left:107px;top:15.5px;">1004</div>
<div class="t" style="left:162.5px;top:15.5px;">Kis Jolán Kis Jolán</div>
<div class="t" style="left:277.5px;top:15.5px;">1004</div>
<div class="t" style="left:321.5px;top:15.5px;">Nagykanizsa</div>
<div class="t" style="left:377.5px;top:15.5px;">8800</div>
<div class="t" style="left:415.5px;top:15.5px;">Szőlő u. 7.</div>
<div class="t" style="left:501px;top:15.5px;">Élelmiszeripari Kft.</div>
<div class="t" style="left:627.5px;top:15.5px;">69-VMS/2007</div>
<div class="t" style="left:744px;top:15.5px;">N</div>
<svg class="a" style="left:461px;top:16.4px" width="7" height="9" viewBox="0 0 7 9"><path d="M0.6 0.8 L6.2 7.8 M6.2 0.8 L0.6 7.8" stroke="#303040" stroke-width="0.9"/></svg>
<div class="a" style="left:56px;top:15.0px;width:1px;height:15.3px;background:#c4bfea"></div>
<div class="a" style="left:103px;top:15.0px;width:1px;height:15.3px;background:#c4bfea"></div>
<div class="a" style="left:159px;top:15.0px;width:1px;height:15.3px;background:#c4bfea"></div>
<div class="a" style="left:274px;top:15.0px;width:1px;height:15.3px;background:#c4bfea"></div>
<div class="a" style="left:318px;top:15.0px;width:1px;height:15.3px;background:#c4bfea"></div>
<div class="a" style="left:374px;top:15.0px;width:1px;height:15.3px;background:#c4bfea"></div>
<div class="a" style="left:412px;top:15.0px;width:1px;height:15.3px;background:#c4bfea"></div>
<div class="a" style="left:458px;top:15.0px;width:1px;height:15.3px;background:#c4bfea"></div>
<div class="a" style="left:498px;top:15.0px;width:1px;height:15.3px;background:#c4bfea"></div>
<div class="a" style="left:571px;top:15.0px;width:1px;height:15.3px;background:#c4bfea"></div>
<div class="a" style="left:624px;top:15.0px;width:1px;height:15.3px;background:#c4bfea"></div>
<div class="a" style="left:742px;top:15.0px;width:1px;height:15.3px;background:#c4bfea"></div>
<div class="a" style="left:0px;top:30.3px;width:747px;height:15.3px;background:#f8f8f2"></div>
<div class="t" style="left:-180px;width:200px;text-align:right;top:30.8px;">999</div>
<div class="a" style="left:25px;top:33.1px;width:9.5px;height:9.5px;background:#fff;border-top:1.6px solid #303040;border-left:1.6px solid #303040;border-right:1px solid #d0d0d8;border-bottom:1px solid #d0d0d8"></div>
<div class="t" style="left:41px;top:30.8px;">01</div>
<div class="t" style="left:-99px;width:200px;text-align:right;top:30.8px;">900</div>
<div class="t" style="left:107px;top:30.8px;">1005</div>
<div class="t" style="left:162.5px;top:30.8px;">Szabó Gáspár Szabó Gáspár</div>
<div class="t" style="left:277.5px;top:30.8px;">1005</div>
<div class="t" style="left:321.5px;top:30.8px;">Kalocsa</div>
<div class="t" style="left:377.5px;top:30.8px;">6300</div>
<div class="t" style="left:415.5px;top:30.8px;">Szép u. 67.</div>
<div class="t" style="left:501px;top:30.8px;">Élelmiszeripari Kft.</div>
<div class="t" style="left:627.5px;top:30.8px;">72-VMS/2007</div>
<div class="t" style="left:744px;top:30.8px;">N</div>
<svg class="a" style="left:461px;top:31.7px" width="7" height="9" viewBox="0 0 7 9"><path d="M0.6 0.8 L6.2 7.8 M6.2 0.8 L0.6 7.8" stroke="#303040" stroke-width="0.9"/></svg>
<div class="a" style="left:56px;top:30.3px;width:1px;height:15.3px;background:#dcdcdc"></div>
<div class="a" style="left:103px;top:30.3px;width:1px;height:15.3px;background:#dcdcdc"></div>
<div class="a" style="left:159px;top:30.3px;width:1px;height:15.3px;background:#dcdcdc"></div>
<div class="a" style="left:274px;top:30.3px;width:1px;height:15.3px;background:#dcdcdc"></div>
<div class="a" style="left:318px;top:30.3px;width:1px;height:15.3px;background:#dcdcdc"></div>
<div class="a" style="left:374px;top:30.3px;width:1px;height:15.3px;background:#dcdcdc"></div>
<div class="a" style="left:412px;top:30.3px;width:1px;height:15.3px;background:#dcdcdc"></div>
<div class="a" style="left:458px;top:30.3px;width:1px;height:15.3px;background:#dcdcdc"></div>
<div class="a" style="left:498px;top:30.3px;width:1px;height:15.3px;background:#dcdcdc"></div>
<div class="a" style="left:571px;top:30.3px;width:1px;height:15.3px;background:#dcdcdc"></div>
<div class="a" style="left:624px;top:30.3px;width:1px;height:15.3px;background:#dcdcdc"></div>
<div class="a" style="left:742px;top:30.3px;width:1px;height:15.3px;background:#dcdcdc"></div>
</div>
<div class="a" style="left:15px;top:496.5px;width:23px;height:15.3px;background:#aea8d9;border-left:2px solid #101018;border-bottom:1px solid #d6d3ee"></div>
<div class="t" style="left:19.5px;top:499.2px;font-size:9.6px;-webkit-text-stroke:0.3px #101018;color:#101018;">1</div>
<div class="a" style="left:15px;top:511.8px;width:23px;height:15.3px;background:#aea8d9;border-bottom:1px solid #2c2660;border-top:1px solid #d6d3ee;border-right:1.3px solid #101018"></div>
<div class="t" style="left:19.5px;top:514.5px;font-size:9.6px;">2</div>
<div class="a" style="left:15px;top:551px;width:770px;height:10.5px;background:#b8b2e2"></div>
<div class="a" style="left:14px;top:561.2px;width:771px;height:1.2px;background:#2c2660"></div>
<div class="a" style="left:14px;top:562.4px;width:771px;height:1px;background:#ccc8ee"></div>
<div class="a" style="left:15px;top:551px;width:11px;height:10.5px;background:#aea8d9;border-top:1px solid #d6d3ee;border-left:1px solid #d6d3ee;border-right:1px solid #2c2660;border-bottom:1px solid #2c2660;"></div>
<svg class="a" style="left:18px;top:553px" width="5" height="7" viewBox="0 0 5 7"><path d="M4 0.5 L4 6.5 L0.8 3.5 Z" fill="#101018"/></svg>
<div class="a" style="left:773px;top:551px;width:12px;height:10.5px;background:#aea8d9;border-top:1px solid #d6d3ee;border-left:1px solid #d6d3ee;border-right:1px solid #2c2660;border-bottom:1px solid #2c2660;"></div>
<svg class="a" style="left:777px;top:553px" width="5" height="7" viewBox="0 0 5 7"><path d="M1 0.5 L1 6.5 L4.2 3.5 Z" fill="#101018"/></svg>
<div class="a" style="left:0px;top:447px;width:4px;height:146px;background:#c4c0e8;border-left:1px solid #e0def4"></div>
<div class="a" style="left:3px;top:578.8px;width:32px;height:14px;background:#aea8d9;border-top:1px solid #6a62a8;border-left:1px solid #6a62a8;border-right:1px solid #d6d3ee;border-bottom:1px solid #d6d3ee"></div>
<div class="t" style="left:4.5px;top:580.2px;">-v1.72X</div>
<div class="a" style="left:35.5px;top:578.8px;width:81px;height:14px;background:#aca6d8;border-top:1px solid #6a62a8;border-left:1px solid #6a62a8;border-right:1px solid #d6d3ee;border-bottom:1px solid #d6d3ee"></div>
<div class="t" style="left:37.5px;top:580.2px;">1 / 6</div>
<div class="a" style="left:117.5px;top:578.8px;width:16px;height:14px;background:#aea8d9;border-top:1px solid #6a62a8;border-left:1px solid #6a62a8;border-right:1px solid #d6d3ee;border-bottom:1px solid #d6d3ee"></div>
<div class="a" style="left:120px;top:581px;width:9px;height:9px;border-radius:50%;background:#fff;border-top:1.5px solid #303040;border-left:1.5px solid #303040;border-right:1px solid #c8c4e8;border-bottom:1px solid #c8c4e8"></div>
<div class="a" style="left:134px;top:578.8px;width:662px;height:14px;background:#aea8d9;border-top:1px solid #6a62a8;border-left:1px solid #6a62a8;border-right:1px solid #d6d3ee;border-bottom:1px solid #d6d3ee"></div>
<div class="a" style="left:134px;top:578.8px;width:1.2px;height:14px;background:#2c2660"></div>
<div class="t" style="left:137px;top:580.2px;">A rakomány KG-ban mért tömege</div>
<div class="a" style="left:0px;top:592.3px;width:800px;height:1.4px;background:#2c2660"></div>
<div class="a" style="left:0px;top:593.7px;width:800px;height:7px;background:#c0bce8"></div>
<div class="a" style="left:0px;top:58px;width:1px;height:535px;background:#d4d0f0"></div>
<div class="a" style="left:796.5px;top:58px;width:1px;height:535px;background:#d0ccec"></div>
<div class="a" style="left:798.8px;top:58px;width:1.2px;height:535px;background:#2c2660"></div>
</div></body></html>
